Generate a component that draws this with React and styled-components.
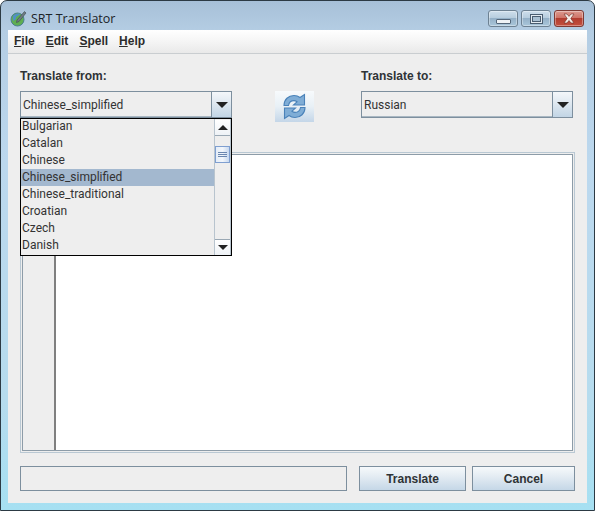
import React from "react";
import styled, { createGlobalStyle } from "styled-components";

const Global = createGlobalStyle`
  html, body { margin: 0; padding: 0; background: #fff; }
  body { width: 595px; height: 511px; overflow: hidden; font-family: "Liberation Sans", Arial, sans-serif; }
  * { box-sizing: border-box; }
`;

const Frame = styled.div`
  width: 595px;
  height: 511px;
  display: flex;
  flex-direction: column;
  border: 1px solid #2c3a44;
  border-radius: 7px 7px 0 0;
  padding: 0 7px 7px;
  background: linear-gradient(180deg, #a7c0d8 0, #b4cde3 30px, #bcd8ee 160px, #b6dcee 400px, #a6e0f2 100%);
`;

const TitleBar = styled.div`
  height: 29px;
  flex: none;
  display: flex;
  align-items: flex-start;
`;

const AppIcon = styled.svg`
  width: 17px;
  height: 17px;
  margin: 9px 4px 0 2px;
  flex: none;
`;

const Title = styled.span`
  margin-top: 10px;
  font: 12.5px/15px "Open Sans", sans-serif;
  color: #1c2328;
`;

const WindowControls = styled.div`
  margin-left: auto;
  margin-right: 3px;
  margin-top: 9px;
  display: flex;
  gap: 3px;
`;

const WinButton = styled.div`
  width: 30px;
  height: 17px;
  display: flex;
  align-items: center;
  justify-content: center;
  border: 1px solid ${(p) => (p.$close ? "#7e3a34" : "#6d8192")};
  border-radius: 3px;
  box-shadow: inset 0 0 0 1px rgba(255, 255, 255, 0.35);
  background: ${(p) =>
    p.$close
      ? "linear-gradient(180deg, #dc9a90 0, #cf7468 45%, #b23d30 50%, #c4503f 100%)"
      : "linear-gradient(180deg, #cfdfec 0, #b7cdde 45%, #95b1c8 50%, #a9c6da 100%)"};
`;

const MinGlyph = styled.div`
  width: 15px;
  height: 5px;
  margin-top: 5px;
  background: #eef2f5;
  border: 1px solid #54677a;
  border-radius: 1px;
`;

const MaxGlyph = styled.div`
  width: 13px;
  height: 10px;
  background: #e3ebf1;
  border: 1px solid #4a5d70;
  display: flex;
  align-items: center;
  justify-content: center;
  &::after { content: ""; width: 7px; height: 4px; background: #a9c0d2; border: 1px solid #4a5d70; }
`;

const CloseGlyph = styled.svg`
  width: 16px;
  height: 11px;
`;

const Client = styled.div`
  flex: 1;
  min-height: 0;
  display: flex;
  flex-direction: column;
  background: #eeeeee;
`;

const MenuBar = styled.div`
  height: 24px;
  flex: none;
  display: flex;
  align-items: center;
  padding: 0 0 2px 6px;
  gap: 11px;
  background: linear-gradient(180deg, #ffffff 0, #f7f7f7 40%, #e9e9e9 100%);
  border-bottom: 1px solid #c9cdd0;
`;

const MenuItem = styled.span`
  font: bold 12px/14px "Liberation Sans", sans-serif;
  color: #2c2c2c;
  &::first-letter { text-decoration: underline; }
`;

const Content = styled.div`
  flex: 1;
  min-height: 0;
  display: flex;
  flex-direction: column;
  padding: 15px 12px 12px;
`;

const Fields = styled.div`
  display: flex;
  flex: none;
`;

const Field = styled.div`
  width: 212px;
  display: flex;
  flex-direction: column;
  gap: 8px;
  position: relative;
`;

const Label = styled.label`
  font: bold 12px/14px "Liberation Sans", sans-serif;
  color: #2f3336;
`;

const Combo = styled.div`
  height: 27px;
  display: flex;
  border: 1px solid #7d8f9e;
  background: #eeeeee;
  box-shadow: inset 0 -1px 0 #a9b7c2;
`;

const ComboValue = styled.span`
  flex: 1;
  padding-left: 2px;
  font: 12px/27px Roboto, sans-serif;
  color: #333;
`;

const ComboArrow = styled.div`
  width: 20px;
  flex: none;
  border-left: 1px solid #7d8f9e;
  display: flex;
  align-items: center;
  justify-content: center;
  background: linear-gradient(180deg, #f4f7fa 0, #dfe8f0 45%, #c2d5e5 100%);
  &::after {
    content: "";
    border-left: 6px solid transparent;
    border-right: 6px solid transparent;
    border-top: 6px solid #222;
  }
`;

const SwapButton = styled.div`
  width: 39px;
  height: 31px;
  flex: none;
  margin: 22px 47px 0 43px;
  display: flex;
  align-items: center;
  justify-content: center;
  background: linear-gradient(180deg, #f7fafc 0, #e8f0f6 50%, #c4d6e8 100%);
`;

const Popup = styled.div`
  position: absolute;
  left: 0;
  top: 49px;
  z-index: 2;
  width: 212px;
  height: 138px;
  display: flex;
  overflow: hidden;
  background: #eeeeee;
  border: 1px solid #000;
`;

const List = styled.ul`
  flex: 1;
  margin: -1px 0 0;
  padding: 0;
  list-style: none;
`;

const Option = styled.li`
  height: 17px;
  padding-left: 1px;
  font: 12px/17px Roboto, sans-serif;
  color: #333;
  background: ${(p) => (p.$selected ? "#a3b8cf" : "transparent")};
`;

const ScrollBar = styled.div`
  width: 17px;
  flex: none;
  display: flex;
  flex-direction: column;
  border-left: 1px solid #b8c4ce;
  border-right: 1px solid #b8c4ce;
  background: #eeeeee;
`;

const ScrollButton = styled.div`
  height: 16px;
  flex: none;
  display: flex;
  align-items: center;
  justify-content: center;
  border: 1px solid #9aa8b4;
  border-width: ${(p) => (p.$up ? "0 0 1px 0" : "1px 0 0 0")};
  background: linear-gradient(180deg, #ffffff 0, #eef2f6 100%);
  margin-top: ${(p) => (p.$up ? "1px" : "auto")};
  &::after {
    content: "";
    border-left: 5px solid transparent;
    border-right: 5px solid transparent;
    ${(p) => (p.$up ? "border-bottom: 5px solid #222;" : "border-top: 5px solid #222;")}
  }
`;

const ScrollThumb = styled.div`
  height: 17px;
  flex: none;
  margin-top: 10px;
  display: flex;
  flex-direction: column;
  align-items: center;
  justify-content: center;
  gap: 1px;
  border: 1px solid #7f9fd0;
  background: linear-gradient(90deg, #e4edf8 0, #f2f6fb 50%, #c8d9f0 100%);
  & > i { display: block; width: 9px; height: 1px; background: #6b87b0; }
`;

const TextPanel = styled.div`
  flex: 1;
  min-height: 0;
  margin-top: 30px;
  padding: 1px;
  display: flex;
  border: 1px solid #b9c8d3;
  background: #eeeeee;
`;

const TextInner = styled.div`
  flex: 1;
  display: flex;
  border: 1px solid #8d9ca8;
  background: #fff;
`;

const Gutter = styled.div`
  width: 33px;
  flex: none;
  background: #eeeeee;
  border-right: 2px solid #7f7f7f;
`;

const Footer = styled.div`
  flex: none;
  height: 25px;
  margin-top: 13px;
  display: flex;
`;

const StatusBox = styled.div`
  width: 327px;
  border: 1px solid #7d8f9e;
  background: #eeeeee;
`;

const ActionButton = styled.button`
  width: ${(p) => p.$w}px;
  margin-left: ${(p) => p.$ml}px;
  padding: 0;
  border: 1px solid #7d8f9e;
  background: linear-gradient(180deg, #f6f9fb 0, #e4ecf3 40%, #c5d7e7 100%);
  font: bold 12px/14px "Liberation Sans", sans-serif;
  color: #2f3336;
`;

const options = ["Bulgarian", "Catalan", "Chinese", "Chinese_simplified", "Chinese_traditional", "Croatian", "Czech", "Danish"];

const arrowShape = "M3 12.500C3 6.500 7.500 2.500 13 2.500C15.500 2.500 17.500 3.300 19 4.500L23.500 1.500V12H12.500L16 8.800C15 8 14 7.600 13 7.600C10 7.600 8 9.500 7.500 12.500Z";

export default function App() {
  return (
    <>
      <Global />
      <Frame>
        <TitleBar>
          <AppIcon viewBox="0 0 17 17">
            <circle cx="7.5" cy="9.5" r="6.5" fill="#5fae52" stroke="#4a7f8f" />
            <path d="M3 6c2-2 5-3 7-2-1 2-4 2-4 4s-2 2-3 3z" fill="#4f8fc4" />
            <path d="M7 10 14.500 1.500 16 3 9 11.500 6.500 12.500z" fill="#6f7a80" stroke="#3c4a50" strokeWidth="0.6" />
          </AppIcon>
          <Title>SRT Translator</Title>
          <WindowControls>
            <WinButton><MinGlyph /></WinButton>
            <WinButton><MaxGlyph /></WinButton>
            <WinButton $close>
              <CloseGlyph viewBox="0 0 16 11">
                <path d="M3 1h3l2 2.400L10 1h3L9.800 5.500 13 10h-3L8 7.500 6 10H3l3.200-4.500z" fill="#f4ece8" stroke="#6d2a22" strokeWidth="0.6" />
              </CloseGlyph>
            </WinButton>
          </WindowControls>
        </TitleBar>
        <Client>
          <MenuBar>
            <MenuItem>File</MenuItem>
            <MenuItem>Edit</MenuItem>
            <MenuItem>Spell</MenuItem>
            <MenuItem>Help</MenuItem>
          </MenuBar>
          <Content>
            <Fields>
              <Field>
                <Label>Translate from:</Label>
                <Combo>
                  <ComboValue>Chinese_simplified</ComboValue>
                  <ComboArrow />
                </Combo>
                <Popup>
                  <List>
                    {options.map((o) => (
                      <Option key={o} $selected={o === "Chinese_simplified"}>{o}</Option>
                    ))}
                  </List>
                  <ScrollBar>
                    <ScrollButton $up />
                    <ScrollThumb><i /><i /><i /></ScrollThumb>
                    <ScrollButton />
                  </ScrollBar>
                </Popup>
              </Field>
              <SwapButton>
                <svg width="27" height="27" viewBox="0 0 27 27">
                  <path d={arrowShape} fill="#7fadd6" stroke="#4a82b9" strokeWidth="1.1" />
                  <path d={arrowShape} fill="#7fadd6" stroke="#4a82b9" strokeWidth="1.1" transform="rotate(180 13.5 13.5)" />
                </svg>
              </SwapButton>
              <Field>
                <Label>Translate to:</Label>
                <Combo>
                  <ComboValue>Russian</ComboValue>
                  <ComboArrow />
                </Combo>
              </Field>
            </Fields>
            <TextPanel>
              <TextInner>
                <Gutter />
              </TextInner>
            </TextPanel>
            <Footer>
              <StatusBox />
              <ActionButton $w={107} $ml={12}>Translate</ActionButton>
              <ActionButton $w={103} $ml={6}>Cancel</ActionButton>
            </Footer>
          </Content>
        </Client>
      </Frame>
    </>
  );
}
